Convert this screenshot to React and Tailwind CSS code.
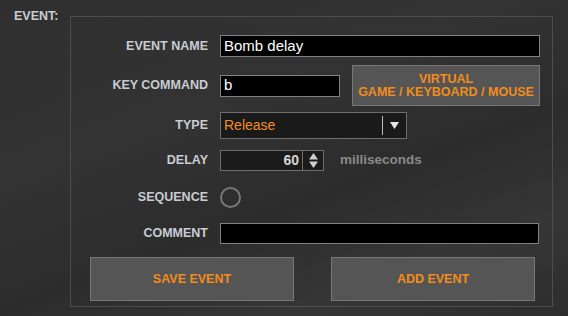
import React from 'react';

const labelCls = 'w-[137px] shrink-0 text-right text-[12.5px] font-bold text-[#c9ccd2] leading-none';
const orange = 'text-[#f28c1c]';

function Row({ label, children, className = '' }) {
  return (
    <div className={`flex items-center gap-3 ${className}`}>
      <div className={labelCls}>{label}</div>
      {children}
    </div>
  );
}

export default function App() {
  return (
    <div
      className="w-[568px] h-[316px] overflow-hidden flex items-start bg-[linear-gradient(160deg,#2f2f2f_0%,#333333_35%,#2c2c2c_60%,#363636_80%,#2d2d2d_100%)]"
      style={{ fontFamily: '"Liberation Sans", Arial, sans-serif' }}
    >
      {/* Section label */}
      <div className="w-[70px] shrink-0 pl-[14px] pt-[10px] text-[12.5px] font-bold text-[#c9ccd2] leading-none">
        EVENT:
      </div>

      {/* Event panel */}
      <div className="mt-[16px] w-[483px] h-[291px] border border-[#4d4d4d] pt-[18px] flex flex-col">
        <Row label="EVENT NAME">
          <div className="w-[320px] h-[22px] bg-black border border-[#808080] flex items-center px-[3px] text-[15px] text-white">
            Bomb delay
          </div>
        </Row>

        <Row label="KEY COMMAND" className="mt-[8px]">
          <div className="w-[120px] h-[22px] bg-black border border-[#808080] flex items-center px-[3px] text-[15px] text-white">
            b
          </div>
          <button className={`w-[188px] h-[41px] bg-[#555555] border border-[#777777] flex flex-col items-center justify-center text-[12.5px] font-bold leading-[13px] ${orange}`}>
            <span>VIRTUAL</span>
            <span>GAME / KEYBOARD / MOUSE</span>
          </button>
        </Row>

        <Row label="TYPE" className="mt-[6px]">
          <div className="w-[187px] h-[27px] bg-[#1a1a1a] border border-[#6e6e6e] flex items-center">
            <span className={`flex-1 pl-[3px] text-[14px] ${orange}`}>Release</span>
            <div className="w-px h-[19px] bg-[#bbbbbb]" />
            <div className="w-[23px] flex items-center justify-center">
              <svg width="9" height="7" viewBox="0 0 9 7">
                <path d="M0 0 L9 0 L4.5 7 Z" fill="#e6e6e6" />
              </svg>
            </div>
          </div>
        </Row>

        <Row label="DELAY" className="mt-[11px]">
          <div className="flex items-center">
            <div className="w-[83px] h-[21px] bg-[#1b1b1b] border border-[#6e6e6e] flex items-center justify-end pr-[3px] text-[14px] font-bold text-[#d6d6d6]">
              60
            </div>
            <div className="w-[21px] h-[21px] bg-[#1b1b1b] border border-l-0 border-[#6e6e6e] flex items-center justify-center">
              <svg width="9" height="15" viewBox="0 0 9 15">
                <path d="M4.5 0 L9 6.5 L0 6.5 Z" fill="#d0d0d0" />
                <path d="M0 8.5 L9 8.5 L4.5 15 Z" fill="#d0d0d0" />
              </svg>
            </div>
          </div>
          <span className="ml-[4px] text-[13.5px] font-bold text-[#8a8a8a]">milliseconds</span>
        </Row>

        <Row label="SEQUENCE" className="mt-[16px] h-[20px]">
          <div className="w-[21px] h-[21px] rounded-full border-[2.5px] border-[#777777]" />
        </Row>

        <Row label="COMMENT" className="mt-[16px]">
          <div className="w-[319px] h-[21px] bg-black border border-[#808080]" />
        </Row>

        <div className="mt-[13px] pl-[19px] flex gap-[37px]">
          <button className={`w-[204px] h-[44px] bg-[#555555] border border-[#777777] text-[12.5px] font-bold ${orange}`}>
            SAVE EVENT
          </button>
          <button className={`w-[204px] h-[44px] bg-[#555555] border border-[#777777] text-[12.5px] font-bold ${orange}`}>
            ADD EVENT
          </button>
        </div>
      </div>
    </div>
  );
}
